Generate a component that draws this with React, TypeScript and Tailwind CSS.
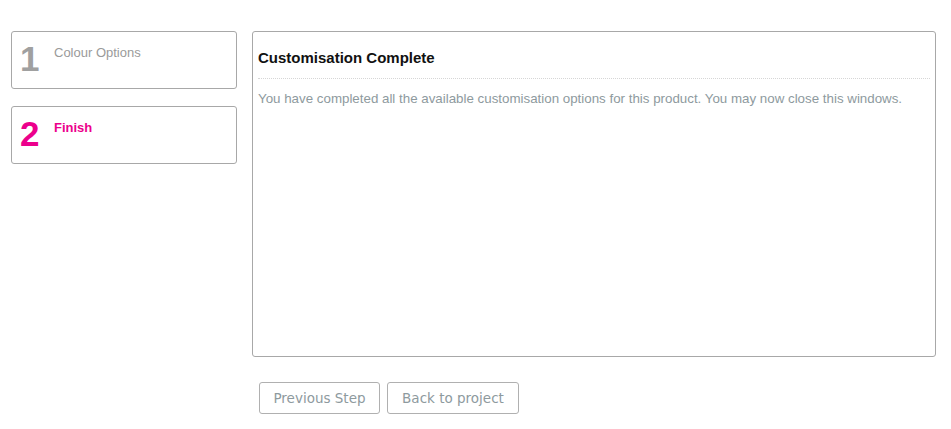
export default function App() {
  const steps = [
    { n: '1', label: 'Colour Options', active: false },
    { n: '2', label: 'Finish', active: true },
  ];

  return (
    <div className="min-h-[429px] bg-white pt-[31px] pl-[11px] pr-[15px] font-['Liberation_Sans',Arial,sans-serif]">
      <div className="flex gap-[15px]">
        <div className="flex w-[226px] flex-col gap-[17px]">
          {steps.map((s) => (
            <div
              key={s.n}
              className="flex h-[58px] rounded-[3px] border border-[#a8a8a8] pl-[8px] pt-[6px]"
            >
              <span
                className={`w-[34px] text-[35px] leading-[42px] font-bold ${
                  s.active ? 'text-[#ec008c]' : 'text-[#a0a0a0]'
                }`}
              >
                {s.n}
              </span>
              <span
                className={`pt-[7px] text-[13px] leading-[15px] ${
                  s.active ? 'font-bold text-[#ec008c]' : 'text-[#9a9a9a]'
                }`}
              >
                {s.label}
              </span>
            </div>
          ))}
        </div>

        <div className="flex flex-1 flex-col">
          <div className="h-[326px] rounded-[3px] border border-[#a8a8a8] px-[5px] pt-[17px]">
            <h2 className="text-[15px] leading-[18px] font-bold text-[#111]">
              Customisation Complete
            </h2>
            <div className="mt-[11px] border-t border-dotted border-[#d6d6d6]" />
            <p className="mt-[12px] text-[13.33px] leading-[16px] text-[#8e9a9e]">
              You have completed all the available customisation options for this product. You may now close this windows.
            </p>
          </div>

          <div className="mt-[25px] flex gap-[7px] pl-[7px] font-['DejaVu_Sans',Verdana,sans-serif]">
            <button className="h-[32px] w-[121px] rounded-[3px] border border-[#b0b0b0] bg-white text-[13.5px] text-[#8e9a9e]">
              Previous Step
            </button>
            <button className="h-[32px] w-[132px] rounded-[3px] border border-[#b0b0b0] bg-white text-[13.5px] text-[#8e9a9e]">
              Back to project
            </button>
          </div>
        </div>
      </div>
    </div>
  );
}
